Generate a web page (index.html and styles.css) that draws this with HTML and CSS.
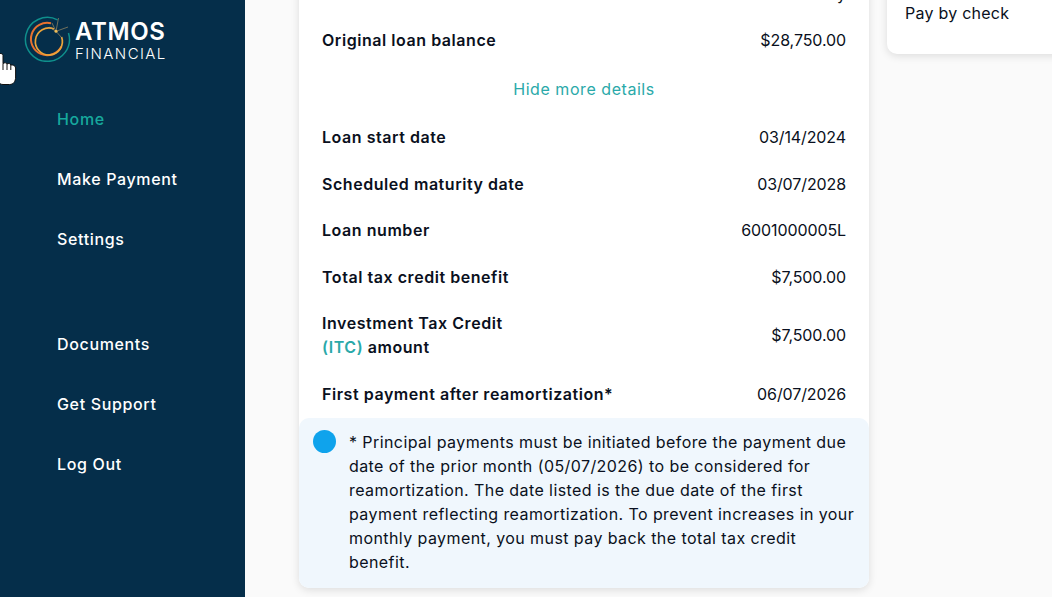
FILE: index.html
```html
<!DOCTYPE html>
<html lang="en">
<head>
    <meta charset="UTF-8">
    <meta name="viewport" content="width=device-width, initial-scale=1.0">
    <title>Atmos Financial</title>
    <link rel="stylesheet" href="styles.css">
</head>
<body>
    <div class="app">
        <aside class="sidebar">
            <div class="logo">
                <svg class="logo-mark" width="48" height="46" viewBox="0 0 48 46" fill="none">
                    <path d="M33.5 3.8A22 22 0 1 0 44.5 17" stroke="#0f8f8c" stroke-width="1.5"/>
                    <path d="M27 7.2A16.2 16.2 0 1 0 37.5 30.5" stroke="#e8722f" stroke-width="2"/>
                    <path d="M30 13A13.5 13.5 0 1 0 37.6 21" stroke="#eca43a" stroke-width="1.7"/>
                    <path d="M32 15.3L34.5 2M32 15.3L44 11M32 15.3L38 22M32 15.3L25 11M32 15.3L28 7" stroke="#b99c68" stroke-width=".6"/>
                    <circle cx="32" cy="15.3" r="1.5" fill="#f0bd58"/>
                </svg>
                <div class="logo-text">
                    <span class="logo-name">ATMOS</span>
                    <span class="logo-sub">FINANCIAL</span>
                </div>
            </div>
            <nav class="nav">
                <a class="nav-link active">Home</a>
                <a class="nav-link">Make Payment</a>
                <a class="nav-link">Settings</a>
            </nav>
            <nav class="nav nav-lower">
                <a class="nav-link">Documents</a>
                <a class="nav-link">Get Support</a>
                <a class="nav-link">Log Out</a>
            </nav>
        </aside>

        <main class="content">
            <section class="card details">
                <div class="row"><span class="label">Schedule</span><span class="value">Monthly</span></div>
                <div class="row"><span class="label">Original loan balance</span><span class="value">$28,750.00</span></div>
                <div class="toggle">Hide more details</div>
                <div class="row"><span class="label">Loan start date</span><span class="value">03/14/2024</span></div>
                <div class="row"><span class="label">Scheduled maturity date</span><span class="value">03/07/2028</span></div>
                <div class="row"><span class="label">Loan number</span><span class="value">6001000005L</span></div>
                <div class="row"><span class="label">Total tax credit benefit</span><span class="value">$7,500.00</span></div>
                <div class="row row-tall"><span class="label">Investment Tax Credit<br><span class="teal">(ITC)</span> amount</span><span class="value">$7,500.00</span></div>
                <div class="row"><span class="label">First payment after reamortization*</span><span class="value">06/07/2026</span></div>
                <div class="note">
                    <span class="note-dot"></span>
                    <p>* Principal payments must be initiated before the payment due<br>date of the prior month (05/07/2026) to be considered for<br>reamortization. The date listed is the due date of the first<br>payment reflecting reamortization. To prevent increases in your<br>monthly payment, you must pay back the total tax credit<br>benefit.</p>
                </div>
            </section>

            <section class="card side">
                <div>Pay by check</div>
            </section>
        </main>
    </div>

    <!-- mouse pointer caught in the screenshot -->
    <svg class="pointer" width="18" height="34" viewBox="0 0 18 34">
        <path d="M-3 2.5C-3 -.3 3 -.3 3 2.5V10.5C4.5 9.5 6.5 9.5 7 11 8.5 10 10.5 10.5 10.8 12 12.5 11.5 15.6 12.5 15.6 15V24C15.6 28.5 13.5 31.5 9.5 31.5H3C1 31.5 -1 30.5 -3 28Z" fill="#fff" stroke="#111" stroke-width="1"/>
        <path d="M3 10.5V17M7 11V17M10.8 12V17" stroke="#111" stroke-width="1" fill="none"/>
    </svg>
</body>
</html>
```

FILE: styles.css
```css
* {
    box-sizing: border-box;
}
html, body {
    margin: 0;
    height: 100%;
    overflow: hidden;
}
body {
    font-family: Inter, "Open Sans", sans-serif;
    font-size: 16px;
    line-height: 24px;
    color: #0a1020;
    background-color: #fafafa;
}
.app {
    display: flex;
    height: 597px;
}

/* sidebar */
.sidebar {
    flex: 0 0 245px;
    background-color: #052e4a;
    color: #fff;
}
.logo {
    display: flex;
    align-items: flex-start;
    gap: 3px;
    padding: 16px 0 0 24px;
}
.logo-text {
    display: flex;
    flex-direction: column;
    padding-top: 4px;
}
.logo-name {
    font-size: 24px;
    line-height: 24px;
    font-weight: 600;
    letter-spacing: .6px;
}
.logo-sub {
    margin-top: .5px;
    font-size: 15px;
    line-height: 18px;
    font-weight: 300;
    letter-spacing: 1.4px;
}
.nav {
    display: flex;
    flex-direction: column;
    padding-left: 57px;
    margin-top: 32.5px;
}
.nav-lower {
    margin-top: 45px;
}
.nav-link {
    height: 60px;
    line-height: 48px;
    font-weight: 500;
    letter-spacing: .65px;
}
.nav-link.active {
    color: #17a99d;
}

/* main area, scrolled down a little */
.content {
    display: flex;
    align-items: flex-start;
    gap: 18px;
    margin-top: -29.67px;
    padding-left: 54px;
    flex: 1;
    min-width: 0;
}
.card {
    background-color: #fff;
    border-radius: 10px;
    box-shadow: 0 2px 8px rgba(0, 0, 0, .12);
}
.details {
    flex: 0 0 570px;
    min-width: 0;
}
.side {
    flex: 0 0 300px;
    padding: 30.67px 18px 29px;
    letter-spacing: .25px;
}
.row {
    display: flex;
    justify-content: space-between;
    align-items: center;
    padding: 11.33px 23px;
}
.row-tall {
    padding: 10.8px 23px 11.86px;
}
.label {
    font-weight: 600;
    letter-spacing: .55px;
}
.value {
    letter-spacing: -.1px;
}
.toggle {
    height: 50px;
    line-height: 50px;
    text-align: center;
    color: #2aa9a9;
    letter-spacing: .55px;
}
.teal {
    color: #2aa9a9;
}
.note {
    display: flex;
    gap: 13px;
    padding: 12px 0 14px 14px;
    background-color: #f0f7fd;
    border-radius: 10px;
}
.note p {
    margin: 0;
    white-space: nowrap;
    letter-spacing: .42px;
}
.note-dot {
    flex: 0 0 23px;
    height: 23px;
    border-radius: 50%;
    background-color: #0fa3ec;
}
.pointer {
    position: absolute;
    left: 0;
    top: 53px;
}
```
